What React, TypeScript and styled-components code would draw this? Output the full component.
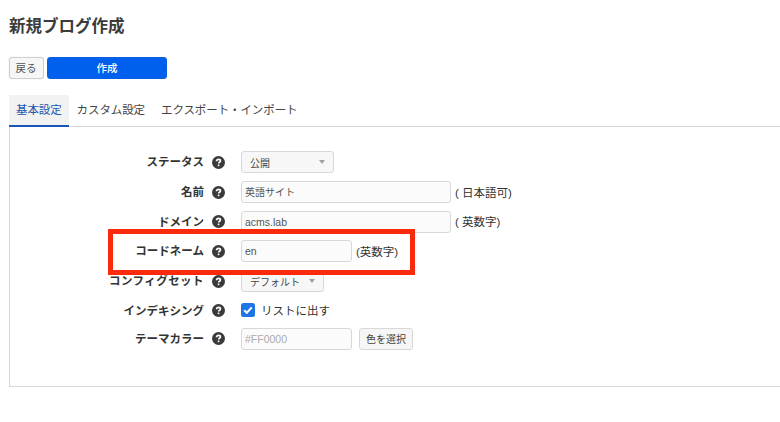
import styled, { createGlobalStyle } from "styled-components";

const GlobalStyle = createGlobalStyle`
  html, body {
    margin: 0;
    background: #fff;
    overflow: hidden;
  }
  body {
    font-family: "Liberation Sans", "Noto Sans CJK JP", sans-serif;
    color: #333;
  }
`;

const Page = styled.div`
  position: relative;
  width: 780px;
  height: 422px;
  padding: 16px 0 0 9px;
  box-sizing: border-box;
  overflow: hidden;
`;

const Title = styled.h1`
  margin: 0;
  font-size: 16.5px;
  line-height: 20px;
  font-weight: 700;
  color: #3b3b3b;
`;

const Toolbar = styled.div`
  display: flex;
  gap: 3px;
  margin-top: 21px;
`;

const BackButton = styled.button`
  width: 35px;
  height: 22px;
  padding: 0 1px 2px 0;
  font: inherit;
  font-size: 10.5px;
  color: #555;
  background: #f6f6f6;
  border: 1px solid #cfcfcf;
  border-radius: 3px;
  box-shadow: 0 0 1px rgba(0, 0, 0, 0.2);
`;

const PrimaryButton = styled.button`
  width: 120px;
  height: 22px;
  padding: 0 0 2px;
  font: inherit;
  font-size: 10.5px;
  font-weight: 500;
  color: #fff;
  background: #0060ee;
  border: 1px solid #0a5fe0;
  border-radius: 3px;
`;

const Tabs = styled.div`
  display: flex;
  margin-top: 16px;
  height: 31px;
  margin-right: -20px;
  border-bottom: 1px solid #d9d9d9;
`;

const Tab = styled.div<{ $active?: boolean }>`
  box-sizing: border-box;
  height: 32px;
  padding: 0 ${(p) => (p.$active ? "7px" : "8px")};
  font-size: 11.5px;
  letter-spacing: -0.1px;
  line-height: 30px;
  white-space: nowrap;
  color: ${(p) => (p.$active ? "#1f55b0" : "#444")};
  background: ${(p) => (p.$active ? "#f2f2f2" : "transparent")};
  border-bottom: ${(p) => (p.$active ? "2px solid #1a56b8" : "none")};
`;

const Panel = styled.div`
  box-sizing: border-box;
  height: 260px;
  margin-right: -20px;
  padding-top: 20px;
  border-left: 1px solid #d9d9d9;
  border-bottom: 1px solid #d9d9d9;
`;

const Row = styled.div<{ $height: number }>`
  display: flex;
  align-items: center;
  height: ${(p) => p.$height}px;
`;

const Label = styled.div<{ $spacing?: number }>`
  width: 194px;
  padding-bottom: 2px;
  text-align: right;
  font-size: 11.5px;
  font-weight: 700;
  letter-spacing: ${(p) => p.$spacing ?? 0}px;
  color: #333;
  white-space: nowrap;
`;

const Help = styled.span`
  display: flex;
  width: 13px;
  height: 13px;
  margin: 0 16px 0 8px;
  flex: none;
`;

const Select = styled.div<{ $width: number }>`
  box-sizing: border-box;
  display: flex;
  align-items: center;
  justify-content: space-between;
  width: ${(p) => p.$width}px;
  height: 22px;
  padding: 0 8px;
  font-size: 10px;
  color: #444;
  background: #f7f7f7;
  border: 1px solid #d8d8d8;
  border-radius: 3px;
`;

const Caret = styled.span`
  width: 0;
  height: 0;
  border-left: 3px solid transparent;
  border-right: 3px solid transparent;
  border-top: 4px solid #a0a0a0;
`;

const Input = styled.div<{ $width: number; $placeholder?: boolean; $latin?: boolean }>`
  box-sizing: border-box;
  width: ${(p) => p.$width}px;
  height: 22px;
  padding: 0 3px;
  font-size: ${(p) => (p.$latin ? "10.5px" : "10px")};
  line-height: 21px;
  color: ${(p) => (p.$placeholder ? "#aaa" : "#555")};
  background: #fbfbfb;
  border: 1px solid #d8d8d8;
  border-radius: 3px;
`;

const Note = styled.span<{ $gap: number }>`
  margin-left: ${(p) => p.$gap}px;
  padding-bottom: 1px;
  font-size: 11.5px;
  color: #333;
`;

const CheckLabel = styled.label`
  display: flex;
  align-items: center;
  gap: 6px;
  padding-bottom: 2px;
  font-size: 11.5px;
  color: #333;
`;

const CheckBox = styled.span`
  display: flex;
  align-items: center;
  justify-content: center;
  width: 14px;
  height: 14px;
  background: #1f75e6;
  border-radius: 2.5px;
`;

const ColorButton = styled.button`
  width: 54px;
  height: 22px;
  margin-left: 7px;
  padding: 0;
  font: inherit;
  font-size: 10px;
  color: #444;
  background: #f6f6f6;
  border: 1px solid #d8d8d8;
  border-radius: 3px;
`;

const Highlight = styled.div`
  position: absolute;
  left: 108px;
  top: 229px;
  width: 307px;
  height: 46px;
  box-sizing: border-box;
  border: 5px solid #fb2a0c;
  pointer-events: none;
`;

function HelpIcon() {
  return (
    <Help>
      <svg viewBox="0 0 12 12" width="13" height="13">
        <circle cx="6" cy="6" r="6" fill="#3a3a3a" />
        <path
          d="M4.2 4.8c0-1 .8-1.7 1.8-1.7s1.8.6 1.8 1.5c0 1.2-1.7 1.2-1.7 2.4"
          fill="none"
          stroke="#fff"
          strokeWidth="1.5"
        />
        <rect x="5.3" y="7.9" width="1.5" height="1.5" fill="#fff" />
      </svg>
    </Help>
  );
}

function App() {
  return (
    <Page>
      <GlobalStyle />
      <Title>新規ブログ作成</Title>
      <Toolbar>
        <BackButton>戻る</BackButton>
        <PrimaryButton>作成</PrimaryButton>
      </Toolbar>
      <Tabs>
        <Tab $active>基本設定</Tab>
        <Tab>カスタム設定</Tab>
        <Tab>エクスポート・インポート</Tab>
      </Tabs>
      <Panel>
        <Row $height={30}>
          <Label>ステータス</Label>
          <HelpIcon />
          <Select $width={93}>
            公開
            <Caret />
          </Select>
        </Row>
        <Row $height={30}>
          <Label>名前</Label>
          <HelpIcon />
          <Input $width={210}>英語サイト</Input>
          <Note $gap={4}>( 日本語可)</Note>
        </Row>
        <Row $height={29}>
          <Label>ドメイン</Label>
          <HelpIcon />
          <Input $width={210} $latin>acms.lab</Input>
          <Note $gap={4}>( 英数字)</Note>
        </Row>
        <Row $height={30}>
          <Label>コードネーム</Label>
          <HelpIcon />
          <Input $width={111} $latin>en</Input>
          <Note $gap={4}>(英数字)</Note>
        </Row>
        <Row $height={30}>
          <Label $spacing={0.45}>コンフィグセット</Label>
          <HelpIcon />
          <Select $width={83}>
            デフォルト
            <Caret />
          </Select>
        </Row>
        <Row $height={29}>
          <Label>インデキシング</Label>
          <HelpIcon />
          <CheckLabel>
            <CheckBox>
              <svg viewBox="0 0 14 14" width="14" height="14">
                <path d="M3.2 7.2l2.6 2.6 5-5.4" fill="none" stroke="#fff" strokeWidth="2" />
              </svg>
            </CheckBox>
            リストに出す
          </CheckLabel>
        </Row>
        <Row $height={27}>
          <Label>テーマカラー</Label>
          <HelpIcon />
          <Input $width={111} $placeholder $latin>#FF0000</Input>
          <ColorButton>色を選択</ColorButton>
        </Row>
      </Panel>
      <Highlight />
    </Page>
  );
}

export default App;
